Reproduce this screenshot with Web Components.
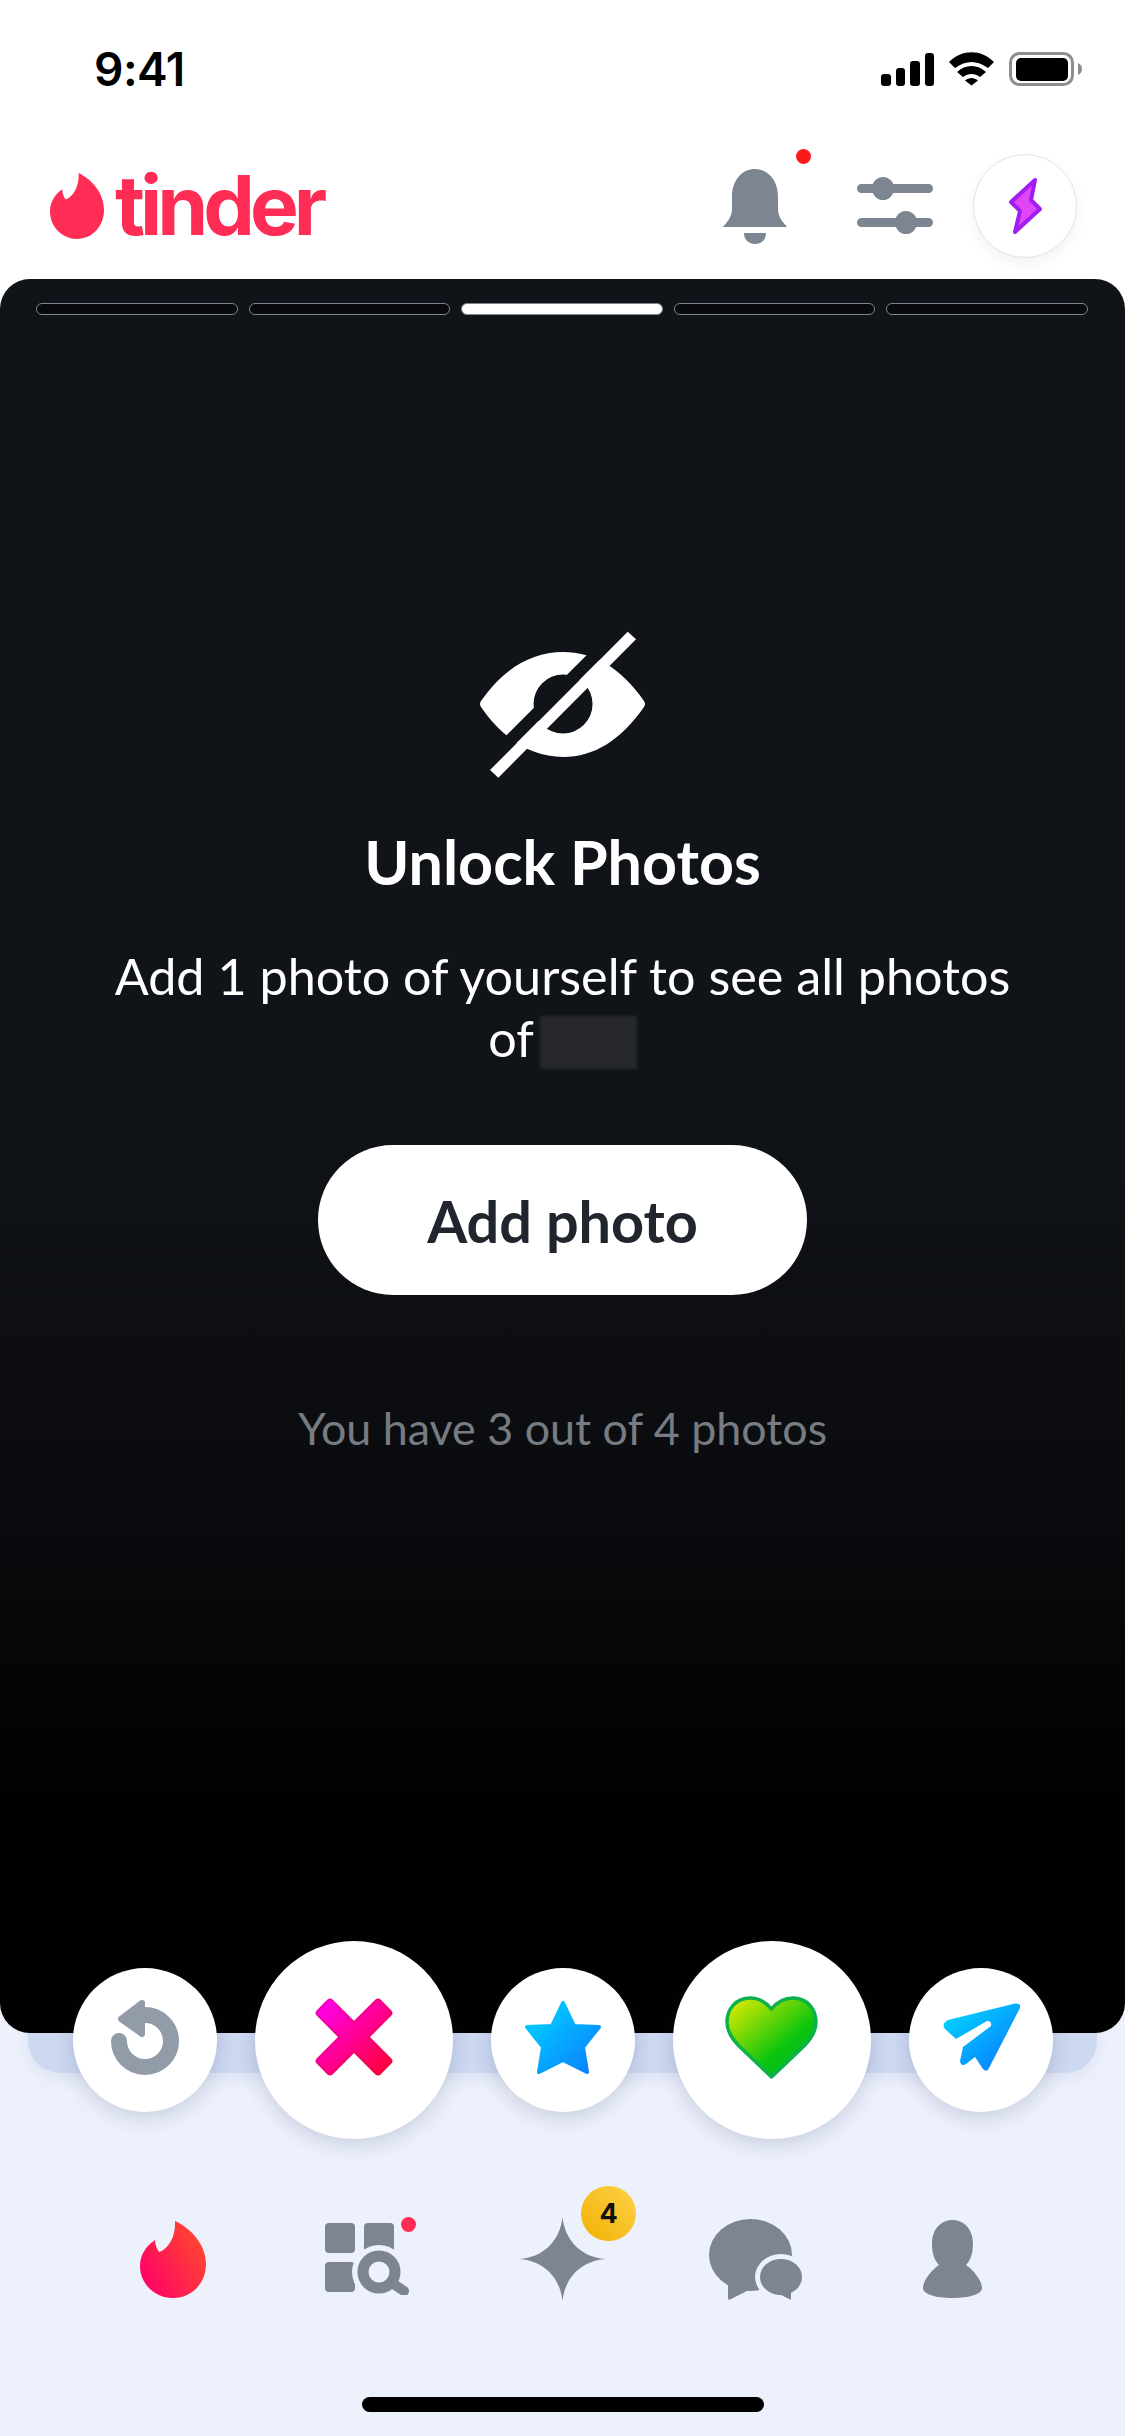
<!DOCTYPE html>
<html lang="en">
<head>
<meta charset="utf-8">
<title>tinder</title>
<style>
    html, body { margin: 0; padding: 0; }
    body {
        width: 1125px;
        height: 2436px;
        overflow: hidden;
        background: linear-gradient(#fff 1000px, #edf1fc 1000px);
        font-family: Lato, "Liberation Sans", sans-serif;
    }
    svg { display: block; }
</style>
</head>
<body>

<status-bar></status-bar>

<top-nav>
    <icon-dot slot="actions" style="--dot-top: -20px; --dot-right: -24px;">
        <svg width="64" height="75" viewBox="0 0 64 75" fill="#7c8591">
            <path d="M32 0C20 0 9 10 9 28V40C9 48 4 53 0 58H64C60 53 55 48 55 40V28C55 10 44 0 32 0Z"/>
            <path d="M21 64H43C43 71 38 75 32 75C26 75 21 71 21 64Z"/>
        </svg>
    </icon-dot>
    <svg slot="actions" width="76" height="57" viewBox="0 0 76 57" fill="#7c8591" style="margin: 23px 0 0 70px">
        <path d="M4.5 11.5H71.500M4.500 45.500H71.500" stroke="#7c8591" stroke-width="9" stroke-linecap="round"/>
        <ellipse cx="26" cy="11.500" rx="11" ry="11.500"/>
        <ellipse cx="49" cy="45.500" rx="11" ry="11.500"/>
    </svg>
    <boost-button slot="actions"></boost-button>
</top-nav>

<photo-stack>
    <photo-card>
        <story-bars count="5" active="2"></story-bars>
        <unlock-panel>
            <span slot="title">Unlock Photos</span>
            <span slot="body">Add 1 photo of yourself to see all photos of<span class="name"></span></span>
            <span slot="action">Add photo</span>
            <span slot="note">You have 3 out of 4 photos</span>
        </unlock-panel>
    </photo-card>
</photo-stack>

<action-row>
    <action-button>
        <svg width="68" height="75" viewBox="0 0 68 75" fill="none">
            <path d="M8 41A26 26 0 1 0 34 15" stroke="#929ca8" stroke-width="16" stroke-linecap="round"/>
            <path d="M31 3L10 19L31 34Z" fill="#929ca8" stroke="#929ca8" stroke-width="6" stroke-linejoin="round"/>
        </svg>
    </action-button>
    <action-button big>
        <svg width="82" height="82" viewBox="0 0 82 82">
            <defs>
                <linearGradient id="xg" x1="0" y1="0" x2="1" y2="1"><stop offset="0" stop-color="#ff00f0"/><stop offset="1" stop-color="#ff0038"/></linearGradient>
                <linearGradient id="xe" x1="0" y1="0" x2="1" y2="1"><stop offset="0" stop-color="#f000b0"/><stop offset="1" stop-color="#f00030"/></linearGradient>
            </defs>
            <path d="M41 30.600L65 6.700L75.300 17L51.400 41L75.300 65L65 75.300L41 51.400L17 75.300L6.700 65L30.600 41L6.700 17L17 6.700Z" fill="url(#xe)" stroke="url(#xe)" stroke-width="8" stroke-linejoin="round"/>
            <path d="M41 30.600L65 6.700L75.300 17L51.400 41L75.300 65L65 75.300L41 51.400L17 75.300L6.700 65L30.600 41L6.700 17L17 6.700Z" fill="url(#xg)" stroke="url(#xg)" stroke-width="5" stroke-linejoin="round"/>
        </svg>
    </action-button>
    <action-button>
        <svg width="78" height="75" viewBox="0 0 78 75">
            <defs><linearGradient id="sg" x1="0" y1="0" x2="1" y2="1"><stop offset="0" stop-color="#00d8ff"/><stop offset="1" stop-color="#0a7cff"/></linearGradient></defs>
            <path d="M39 3L50 26L75 27L59 47L63 72L39 60L15 72L19 47L3 27L28 26Z" fill="url(#sg)" stroke="url(#sg)" stroke-width="4" stroke-linejoin="round"/>
        </svg>
    </action-button>
    <action-button big>
        <svg width="93" height="83" viewBox="0 0 93 83">
            <defs><linearGradient id="hg" x1="0.05" y1="0.05" x2="0.85" y2="0.9"><stop offset="0" stop-color="#dcea00"/><stop offset="0.7" stop-color="#0ac40e"/><stop offset="1" stop-color="#00b82a"/></linearGradient></defs>
            <path d="M46.500 13C40 5 32 2 25 2C11 2 2 13 2 26C2 36 7 43 14 50L46.500 81L79 50C86 43 91 36 91 26C91 13 82 2 68 2C61 2 53 5 46.500 13Z" fill="url(#hg)" stroke="#0db14b" stroke-width="3.500" stroke-linejoin="round"/>
        </svg>
    </action-button>
    <action-button>
        <svg width="78" height="68" viewBox="0 0 78 68">
            <defs><linearGradient id="pg" x1="0" y1="0.1" x2="0.8" y2="1"><stop offset="0" stop-color="#00d8ff"/><stop offset="1" stop-color="#0a7cff"/></linearGradient></defs>
            <path d="M73 .5L6 17Q-1 21 3 26L14 36L45 18Q50 18 49 23L21 44L18 58Q19 64 24 61L33 54L41 66Q45 70 47 65L78 5Q79 0 73 .5Z" fill="url(#pg)"/>
        </svg>
    </action-button>
</action-row>

<tab-bar>
    <tab-item>
        <svg width="66" height="77" viewBox="0 0 66 77">
            <defs><linearGradient id="fg" x1="0" y1="0.8" x2="1" y2="0.2"><stop offset="0" stop-color="#ff0068"/><stop offset="1" stop-color="#ff4b2b"/></linearGradient></defs>
            <path d="M35 0C52 8 66 24 66 43C66 62 52 77 33 77C15 77 0 63 0 45C0 34 6 25 15 19C15 24 17 28 19 31C28 28 36 16 35 0Z" fill="url(#fg)"/>
        </svg>
    </tab-item>
    <tab-item>
        <icon-dot style="--dot-top: -6px; --dot-right: -6px; --dot: #ff2d55;">
            <svg width="85" height="72" viewBox="0 0 85 72" fill="#7c8591">
                <rect x="0" y="0" width="30" height="30" rx="4"/>
                <rect x="39" y="0" width="30" height="30" rx="4"/>
                <rect x="0" y="39" width="30" height="30" rx="4"/>
                <circle cx="54" cy="49" r="27" fill="#edf1fc"/>
                <circle cx="54" cy="49" r="16" fill="none" stroke="#7c8591" stroke-width="11"/>
                <path d="M70 62L79 68" stroke="#7c8591" stroke-width="10" stroke-linecap="round"/>
            </svg>
        </icon-dot>
    </tab-item>
    <tab-item>
        <svg width="89" height="84" viewBox="0 0 89 84" fill="#7c8591">
            <path d="M44.500 0C47 24 64 41 89 42C64 43 47 60 44.500 84C42 60 25 43 0 42C25 41 42 24 44.500 0Z"/>
        </svg>
        <count-badge>4</count-badge>
    </tab-item>
    <tab-item>
        <svg width="93" height="81" viewBox="0 0 93 81" fill="#7c8591" style="margin-right: 4px">
            <ellipse cx="41.500" cy="36" rx="41.500" ry="36"/>
            <path d="M19 66V79Q19 82 22 80L42 70Z"/>
            <ellipse cx="72" cy="58" rx="26" ry="23" fill="#edf1fc"/>
            <ellipse cx="72" cy="58" rx="21" ry="18"/>
            <path d="M82 70V80Q82 81 80 80L70 75Z"/>
        </svg>
    </tab-item>
    <tab-item>
        <svg width="59" height="78" viewBox="0 0 59 78" fill="#7c8591" style="margin-left: 2px">
            <path d="M29.500 0C41 0 50 9 50 24C50 34 47 41 43 45C50 50 59 60 59 68C59 74 47 78 29.500 78C12 78 0 74 0 68C0 60 9 50 16 45C12 41 9 34 9 24C9 9 18 0 29.500 0Z"/>
        </svg>
    </tab-item>
</tab-bar>

<home-indicator></home-indicator>

<script>
class StatusBar extends HTMLElement {
    constructor() {
        super();
        this.attachShadow({ mode: 'open' });
        this.shadowRoot.innerHTML = `
            <style>
                :host {
                    display: flex;
                    align-items: center;
                    justify-content: space-between;
                    box-sizing: border-box;
                    height: 138px;
                    padding: 0 43px 0 94px;
                }
                .time { font: 600 46px/1 Inter, sans-serif; color: #000; letter-spacing: -.5px; }
                .icons { display: flex; align-items: center; gap: 15px; }
                .signal { display: flex; align-items: flex-end; gap: 5px; height: 33px; }
                .signal i { display: block; width: 9.500px; background: #000; border-radius: 3px; }
                svg { display: block; }
            </style>
            <span class="time">9:41</span>
            <div class="icons">
                <div class="signal">
                    <i style="height:12px"></i><i style="height:18px"></i><i style="height:25px"></i><i style="height:33px"></i>
                </div>
                <svg width="45" height="34" viewBox="0 0 45 34">
                    <path d="M0 10C13-3 32-3 45 10L39 16C28 8 17 8 6 16Z"/>
                    <path d="M8 20C16 12 29 12 37 20L31 25C26 21 19 21 14 25Z"/>
                    <path d="M16 28.500C20 25 25 25 29 28.500L22.500 33.500Z"/>
                </svg>
                <svg width="73" height="34" viewBox="0 0 73 34">
                    <rect x="1.500" y="1.500" width="62" height="31" rx="9" fill="none" stroke="#8e8e92" stroke-width="3"/>
                    <rect x="7" y="6" width="52" height="23" rx="5"/>
                    <path d="M69 11C71.500 12 73 14 73 17C73 20 71.500 22 69 23Z" fill="#8e8e92"/>
                </svg>
            </div>
        `;
    }
}

class TopNav extends HTMLElement {
    constructor() {
        super();
        this.attachShadow({ mode: 'open' });
        this.shadowRoot.innerHTML = `
            <style>
                :host {
                    display: flex;
                    align-items: flex-start;
                    justify-content: space-between;
                    box-sizing: border-box;
                    height: 141px;
                    padding: 16px 48px 0 50px;
                }
                .logo { display: flex; align-items: flex-start; gap: 11px; padding-top: 19px; }
                .word {
                    font: 700 82px/66px Inter, sans-serif;
                    letter-spacing: -5px;
                    color: #ff2d55;
                }
                .actions { display: flex; align-items: flex-start; }
                ::slotted(icon-dot) { margin-top: 15px; }
                svg { display: block; }
            </style>
            <div class="logo">
                <svg width="54" height="66" viewBox="0 0 66 77" preserveAspectRatio="none">
                    <path fill="#ff2d55" d="M35 0C52 8 66 24 66 43C66 62 52 77 33 77C15 77 0 63 0 45C0 34 6 25 15 19C15 24 17 28 19 31C28 28 36 16 35 0Z"/>
                </svg>
                <span class="word">tinder</span>
            </div>
            <div class="actions"><slot name="actions"></slot></div>
        `;
    }
}

// plain wrapper so a red dot can sit over an icon
class IconDot extends HTMLElement {
    constructor() {
        super();
        this.attachShadow({ mode: 'open' });
        this.shadowRoot.innerHTML = `
            <style>
                :host { display: block; position: relative; }
                i {
                    position: absolute;
                    top: var(--dot-top);
                    right: var(--dot-right);
                    width: 15px;
                    height: 15px;
                    border-radius: 50%;
                    background: var(--dot, #fb1a1a);
                }
            </style>
            <slot></slot><i></i>
        `;
    }
}

class BoostButton extends HTMLElement {
    constructor() {
        super();
        this.attachShadow({ mode: 'open' });
        this.shadowRoot.innerHTML = `
            <style>
                :host {
                    display: flex;
                    align-items: center;
                    justify-content: center;
                    box-sizing: border-box;
                    width: 104px;
                    height: 104px;
                    margin-left: 40px;
                    border: 1.500px solid #e2e3e6;
                    border-radius: 50%;
                    background: #fff;
                    box-shadow: 0 6px 14px rgba(0, 0, 0, .05);
                }
            </style>
            <svg width="36" height="60" viewBox="0 0 36 60">
                <path d="M28 4L4 26L13 35L8 56L33 33L24 24Z" fill="#e045f7" stroke="#a01ff0" stroke-width="4" stroke-linejoin="round"/>
            </svg>
        `;
    }
}

class PhotoStack extends HTMLElement {
    constructor() {
        super();
        this.attachShadow({ mode: 'open' });
        this.shadowRoot.innerHTML = `
            <style>
                :host { display: grid; height: 1794px; }
                .back {
                    grid-area: 1 / 1;
                    margin: 0 28px;
                    border-radius: 0 0 32px 32px;
                    background: #cdd8f1;
                    box-shadow: 0 6px 16px rgba(90, 110, 170, .1);
                }
                slot { display: block; grid-area: 1 / 1; }
            </style>
            <div class="back"></div>
            <slot></slot>
        `;
    }
}

class PhotoCard extends HTMLElement {
    constructor() {
        super();
        this.attachShadow({ mode: 'open' });
        this.shadowRoot.innerHTML = `
            <style>
                :host {
                    display: block;
                    box-sizing: border-box;
                    height: 1754px;
                    padding-top: 24px;
                    border-radius: 30px;
                    background: linear-gradient(#101318 0, #101318 48%, #0a0b0e 70%, #000 88%);
                }
            </style>
            <slot></slot>
        `;
    }
}

class StoryBars extends HTMLElement {
    constructor() {
        super();
        this.attachShadow({ mode: 'open' });
        const count = Number(this.getAttribute('count'));
        const active = Number(this.getAttribute('active'));
        let bars = '';
        for (let i = 0; i < count; i++) {
            bars += `<i class="${i === active ? 'on' : ''}"></i>`;
        }
        this.shadowRoot.innerHTML = `
            <style>
                :host {
                    display: flex;
                    gap: 11px;
                    padding: 0 37px 0 36px;
                }
                i {
                    flex: 1;
                    box-sizing: border-box;
                    height: 12px;
                    border: 1.500px solid #7c8591;
                    border-radius: 6px;
                    background: #07090c;
                }
                i.on { background: #fff; }
            </style>
            ${bars}
        `;
    }
}

class UnlockPanel extends HTMLElement {
    constructor() {
        super();
        this.attachShadow({ mode: 'open' });
        this.shadowRoot.innerHTML = `
            <style>
                :host {
                    display: flex;
                    flex-direction: column;
                    align-items: center;
                    padding-top: 315px;
                    font-family: Lato, "Liberation Sans", sans-serif;
                    text-align: center;
                }
                svg { display: block; }
                .title {
                    margin-top: 49px;
                    font-size: 61px;
                    line-height: 70px;
                    font-weight: 700;
                    color: #fff;
                }
                .body {
                    width: 920px;
                    margin-top: 48px;
                    font-size: 50.300px;
                    line-height: 62px;
                    color: #fff;
                }
                ::slotted(span[slot="body"]) { display: block; }
                .action {
                    display: flex;
                    align-items: center;
                    justify-content: center;
                    width: 489px;
                    height: 150px;
                    margin-top: 76px;
                    border-radius: 75px;
                    background: #fff;
                    color: #21262e;
                    font-size: 57.600px;
                    font-weight: 700;
                }
                .note {
                    margin-top: 105px;
                    font-size: 44.800px;
                    line-height: 56px;
                    color: #777b82;
                }
            </style>
            <svg width="165" height="148" viewBox="480 630 165 148">
                <path fill="#fff" fill-rule="evenodd" d="M481 701C504 668 532 652 563 652C594 652 621 668 644 701Q646 704 644 707C621 740 594 757 563 757C532 757 504 740 481 707Q479 704 481 701ZM563 674.500A29.500 29.500 0 1 0 563.100 733.500A29.500 29.500 0 1 0 563 674.500Z"/>
                <path d="M460.900 780.900L615.900 625.900L624.700 634.700L469.700 789.700Z" fill="#101318"/>
                <path d="M627.700 631.700L636 639.300L498.300 777.700L490 770Z" fill="#fff"/>
            </svg>
            <div class="title"><slot name="title"></slot></div>
            <div class="body"><slot name="body"></slot></div>
            <div class="action"><slot name="action"></slot></div>
            <div class="note"><slot name="note"></slot></div>
        `;
    }
}

class ActionRow extends HTMLElement {
    constructor() {
        super();
        this.attachShadow({ mode: 'open' });
        this.shadowRoot.innerHTML = `
            <style>
                :host {
                    display: flex;
                    align-items: center;
                    justify-content: center;
                    gap: 38px;
                    height: 198px;
                    margin-top: -132px;
                    position: relative;
                }
            </style>
            <slot></slot>
        `;
    }
}

class ActionButton extends HTMLElement {
    constructor() {
        super();
        this.attachShadow({ mode: 'open' });
        this.shadowRoot.innerHTML = `
            <style>
                :host {
                    display: flex;
                    align-items: center;
                    justify-content: center;
                    box-sizing: border-box;
                    width: 144px;
                    height: 144px;
                    padding-bottom: 6px;
                    border-radius: 50%;
                    background: #fff;
                    box-shadow: 0 6px 20px rgba(40, 55, 100, .18);
                }
                :host([big]) { width: 198px; height: 198px; }
            </style>
            <slot></slot>
        `;
    }
}

class TabBar extends HTMLElement {
    constructor() {
        super();
        this.attachShadow({ mode: 'open' });
        this.shadowRoot.innerHTML = `
            <style>
                :host {
                    display: grid;
                    grid-template-columns: repeat(5, 1fr);
                    align-items: center;
                    height: 240px;
                    padding: 0 76px;
                }
            </style>
            <slot></slot>
        `;
    }
}

class TabItem extends HTMLElement {
    constructor() {
        super();
        this.attachShadow({ mode: 'open' });
        this.shadowRoot.innerHTML = `
            <style>
                :host {
                    display: flex;
                    align-items: center;
                    justify-content: center;
                    position: relative;
                }
            </style>
            <slot></slot>
        `;
    }
}

class CountBadge extends HTMLElement {
    constructor() {
        super();
        this.attachShadow({ mode: 'open' });
        this.shadowRoot.innerHTML = `
            <style>
                :host {
                    display: flex;
                    align-items: center;
                    justify-content: center;
                    position: absolute;
                    top: -31px;
                    left: 116px;
                    width: 55px;
                    height: 55px;
                    border-radius: 50%;
                    background: linear-gradient(45deg, #f0b000, #ffd24a);
                    color: #111;
                    font: 700 27px/1 Inter, sans-serif;
                }
            </style>
            <slot></slot>
        `;
    }
}

class HomeIndicator extends HTMLElement {
    constructor() {
        super();
        this.attachShadow({ mode: 'open' });
        this.shadowRoot.innerHTML = `
            <style>
                :host {
                    display: block;
                    width: 402px;
                    height: 15px;
                    margin: 18px auto 0;
                    border-radius: 8px;
                    background: #000;
                }
            </style>
        `;
    }
}

customElements.define('status-bar', StatusBar);
customElements.define('top-nav', TopNav);
customElements.define('icon-dot', IconDot);
customElements.define('boost-button', BoostButton);
customElements.define('photo-stack', PhotoStack);
customElements.define('photo-card', PhotoCard);
customElements.define('story-bars', StoryBars);
customElements.define('unlock-panel', UnlockPanel);
customElements.define('action-row', ActionRow);
customElements.define('action-button', ActionButton);
customElements.define('tab-bar', TabBar);
customElements.define('tab-item', TabItem);
customElements.define('count-badge', CountBadge);
customElements.define('home-indicator', HomeIndicator);
</script>
<style>
    .name {
        display: inline-block;
        width: 97px;
        height: 53px;
        margin-left: 6px;
        vertical-align: -12px;
        background: #26282d;
        filter: blur(1.500px);
    }
</style>
</body>
</html>
